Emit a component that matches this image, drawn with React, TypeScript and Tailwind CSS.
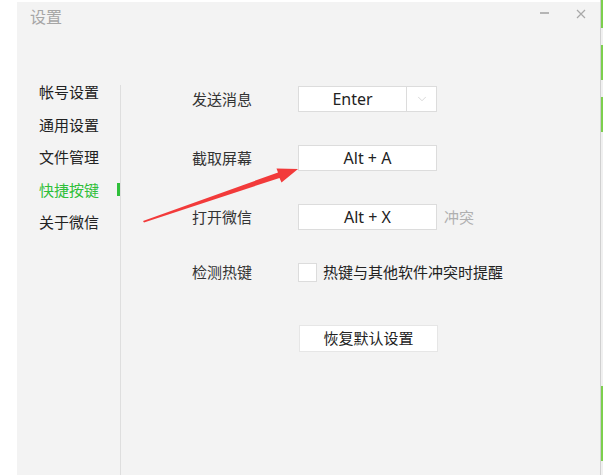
import { ChevronDown } from "lucide-react";

const cjk = { fontFamily: '"Noto Sans CJK SC", "Noto Sans", sans-serif' };
const latin = { fontFamily: '"Noto Sans", "Noto Sans CJK SC", sans-serif' };

const navItems = ["帐号设置", "通用设置", "文件管理", "快捷按键", "关于微信"];

function Label({ text }: { text: string }) {
  return <div className="w-[106px] text-[15px] leading-[20px] text-[#333]">{text}</div>;
}

function KeyBox({ value }: { value: string }) {
  return (
    <div
      className="flex h-[26px] w-[139px] items-center justify-center border border-[#dcdcdc] bg-white text-[16px] text-[#222]"
      style={latin}
    >
      {value}
    </div>
  );
}

export default function App() {
  return (
    <div className="flex h-[475px] w-[603px] overflow-hidden bg-white" style={cjk}>
      <div className="w-[17px] shrink-0" />

      <div className="relative mt-[2px] flex flex-1 flex-col bg-[#f3f3f3]">
        {/* title bar */}
        <div className="flex h-[74px] items-start justify-between pl-[13px] pr-[14px] pt-[3px]">
          <span className="text-[16px] leading-[22px] text-[#a6a6a6]">设置</span>
          <div className="flex items-start gap-[27px] pt-[1px]">
            <div className="mt-[6px] h-[1.5px] w-[9px] bg-[#b5b5b5]" />
            <svg width="10" height="10" viewBox="0 0 10 10" className="mt-[3px]">
              <path d="M1 1 L9 9 M9 1 L1 9" stroke="#a8a8a8" strokeWidth="1.2" />
            </svg>
          </div>
        </div>

        <div className="flex flex-1">
          {/* sidebar */}
          <nav className="flex w-[103px] shrink-0 flex-col pl-[22px]">
            {navItems.map((item) => {
              const active = item === "快捷按键";
              return (
                <div key={item} className="flex h-[32.5px] items-center justify-between">
                  <span className={`text-[15px] ${active ? "text-[#2fbf3a]" : "text-[#222]"}`}>{item}</span>
                  {active && <div className="h-[13px] w-[3px] bg-[#2fbf3a]" />}
                </div>
              );
            })}
          </nav>

          {/* content */}
          <div className="mt-[9px] flex flex-1 flex-col border-l border-[#dedede] pl-[71px] pt-[1px]">
            <div className="flex items-center">
              <Label text="发送消息" />
              <div className="flex h-[26px] w-[139px] border border-[#dcdcdc] bg-white">
                <div className="flex w-[107px] items-center justify-center text-[16px] text-[#222]" style={latin}>
                  Enter
                </div>
                <div className="flex flex-1 items-center justify-center border-l border-[#dcdcdc]">
                  <ChevronDown size={14} strokeWidth={1.2} color="#c8c8c8" />
                </div>
              </div>
            </div>

            <div className="mt-[33px] flex items-center">
              <Label text="截取屏幕" />
              <KeyBox value="Alt + A" />
            </div>

            <div className="mt-[33px] flex items-center">
              <Label text="打开微信" />
              <KeyBox value="Alt + X" />
              <span className="ml-[7px] text-[15px] text-[#b0b0b0]">冲突</span>
            </div>

            <div className="mt-[29px] flex h-[26px] items-center">
              <Label text="检测热键" />
              <div className="h-[19px] w-[19px] border border-[#dcdcdc] bg-white" />
              <span className="ml-[6px] text-[15px] text-[#222]">热键与其他软件冲突时提醒</span>
            </div>

            <div className="mt-[40px] flex">
              <div className="w-[107px]" />
              <button className="flex h-[27px] w-[139px] items-center justify-center border border-[#e6e6e6] bg-white text-[15px] text-[#222]">
                恢复默认设置
              </button>
            </div>
          </div>
        </div>

        {/* red annotation arrow */}
        <svg className="pointer-events-none absolute left-[-17px] top-[-2px]" width="603" height="475">
          <polygon points="143,221 278,172.5 276.5,168.5 298,169 281.5,182.5 279.5,178 144,222.5" fill="#f23a3a" />
        </svg>
      </div>

      {/* edge of the window behind */}
      <div className="flex w-[3px] shrink-0 flex-col border-l border-[#d0d0d0] bg-[#f0f0f0]">
        <div className="h-[28px] bg-[#7ccf4d]" />
        <div className="h-[17px]" />
        <div className="h-[35px] bg-[#7ccf4d]" />
        <div className="h-[17px]" />
        <div className="h-[35px] bg-[#7ccf4d]" />
        <div className="h-[254px]" />
        <div className="h-[75px] bg-[#7ccf4d]" />
      </div>
    </div>
  );
}
